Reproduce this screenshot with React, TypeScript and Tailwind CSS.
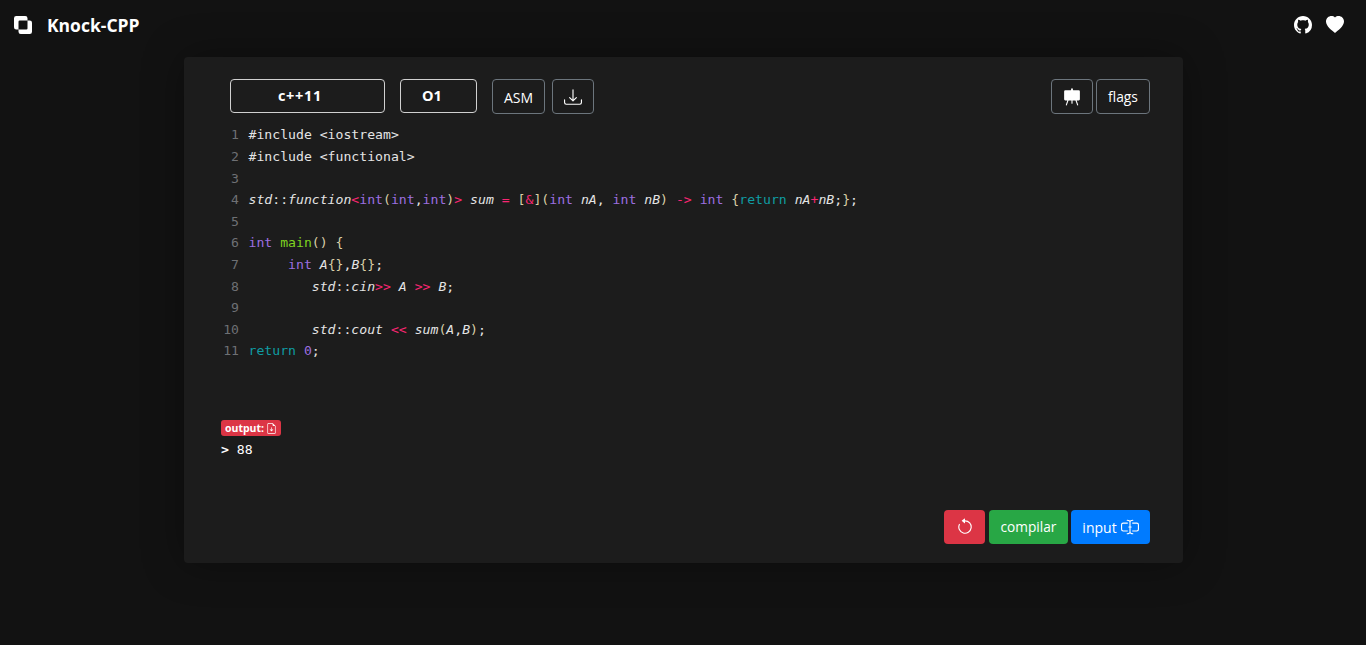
import type { ReactNode } from "react";

const sans = "font-['Open_Sans','Noto_Sans',sans-serif]";

function Kw({ children }: { children: ReactNode }) {
  return <span className="text-[#9c6fe0]">{children}</span>;
}
function Op({ children }: { children: ReactNode }) {
  return <span className="text-[#f92672]">{children}</span>;
}
function It({ children }: { children: ReactNode }) {
  return <span className="italic text-[#e4e4e4]">{children}</span>;
}
function Ret({ children }: { children: ReactNode }) {
  return <span className="text-[#0f9ca3]">{children}</span>;
}
function P({ children }: { children: ReactNode }) {
  return <span className="text-[#d9cfa8]">{children}</span>;
}

const lines: ReactNode[] = [
  <>#include &lt;iostream&gt;</>,
  <>#include &lt;functional&gt;</>,
  <></>,
  <>
    <It>std</It>::<It>function</It><Op>&lt;</Op><Kw>int</Kw><P>(</P><Kw>int</Kw>,<Kw>int</Kw><P>)</P><Op>&gt;</Op> <It>sum</It> <Op>=</Op> <P>[</P><Op>&amp;</Op><P>](</P><Kw>int</Kw> <It>nA</It>, <Kw>int</Kw> <It>nB</It><P>)</P> <Op>-&gt;</Op> <Kw>int</Kw> <P>{"{"}</P><Ret>return</Ret> <It>nA</It><Op>+</Op><It>nB</It>;<P>{"}"}</P>;
  </>,
  <></>,
  <>
    <Kw>int</Kw> <span className="text-[#7fd320]">main</span><P>()</P> <P>{"{"}</P>
  </>,
  <>
    {"     "}<Kw>int</Kw> <It>A</It><P>{"{}"}</P>,<It>B</It><P>{"{}"}</P>;
  </>,
  <>
    {"        "}<It>std</It>::<It>cin</It><Op>&gt;&gt;</Op> <It>A</It> <Op>&gt;&gt;</Op> <It>B</It>;
  </>,
  <></>,
  <>
    {"        "}<It>std</It>::<It>cout</It> <Op>&lt;&lt;</Op> <It>sum</It><P>(</P><It>A</It>,<It>B</It><P>)</P>;
  </>,
  <>
    <Ret>return</Ret> <Kw>0</Kw>;
  </>,
];

function DownloadIcon() {
  return (
    <svg viewBox="0 0 16 16" fill="currentColor" className="w-[18px] h-[18px]">
      <path d="M.5 9.9a.5.5 0 0 1 .5.5v2.5a1 1 0 0 0 1 1h12a1 1 0 0 0 1-1v-2.5a.5.5 0 0 1 1 0v2.5a2 2 0 0 1-2 2H2a2 2 0 0 1-2-2v-2.5a.5.5 0 0 1 .5-.5z" />
      <path d="M7.646 11.854a.5.5 0 0 0 .708 0l3-3a.5.5 0 0 0-.708-.708L8.5 10.293V1.5a.5.5 0 0 0-1 0v8.793L5.354 8.146a.5.5 0 1 0-.708.708l3 3z" />
    </svg>
  );
}

function EaselIcon() {
  return (
    <svg viewBox="0 0 16 16" fill="currentColor" className="w-[18px] h-[18px]">
      <path d="M8.473.337a.5.5 0 0 0-.946 0L6.954 2H2a1 1 0 0 0-1 1v7a1 1 0 0 0 1 1h1.85l-1.323 3.837a.5.5 0 1 0 .946.326L4.908 11H7.5v2.5a.5.5 0 0 0 1 0V11h2.592l1.435 4.163a.5.5 0 0 0 .946-.326L12.15 11H14a1 1 0 0 0 1-1V3a1 1 0 0 0-1-1H9.046L8.473.337z" />
    </svg>
  );
}

export default function App() {
  return (
    <div className={`min-h-screen h-[645px] overflow-hidden bg-[#121212] text-white ${sans}`}>
      <nav className="h-[50px] flex items-center justify-between pl-[14px] pr-[22px]">
        <div className="flex items-center gap-[15px]">
          <svg viewBox="0 0 16 16" fill="currentColor" className="w-[18px] h-[18px]">
            <path d="M0 2a2 2 0 0 1 2-2h8a2 2 0 0 1 2 2v2h2a2 2 0 0 1 2 2v8a2 2 0 0 1-2 2H6a2 2 0 0 1-2-2v-2H2a2 2 0 0 1-2-2V2zm12 2H5a1 1 0 0 0-1 1v7h7a1 1 0 0 0 1-1V4z" />
          </svg>
          <span className="text-[17.5px] font-bold">Knock-CPP</span>
        </div>
        <div className="flex items-center gap-[14px]">
          <svg viewBox="0 0 16 16" fill="currentColor" className="w-[18px] h-[18px]">
            <path d="M8 0C3.58 0 0 3.58 0 8c0 3.54 2.29 6.53 5.47 7.59.4.07.55-.17.55-.38 0-.19-.01-.82-.01-1.49-2.01.37-2.53-.49-2.69-.94-.09-.23-.48-.94-.82-1.13-.28-.15-.68-.52-.01-.53.63-.01 1.08.58 1.23.82.72 1.21 1.87.87 2.33.66.07-.52.28-.87.51-1.07-1.78-.2-3.64-.89-3.64-3.95 0-.87.31-1.59.82-2.15-.08-.2-.36-1.02.08-2.12 0 0 .67-.21 2.2.82.64-.18 1.32-.27 2-.27.68 0 1.36.09 2 .27 1.53-1.04 2.2-.82 2.2-.82.44 1.1.16 1.92.08 2.12.51.56.82 1.27.82 2.15 0 3.07-1.87 3.75-3.65 3.95.29.25.54.73.54 1.48 0 1.07-.01 1.93-.01 2.2 0 .21.15.46.55.38A8.012 8.012 0 0 0 16 8c0-4.42-3.58-8-8-8z" />
          </svg>
          <svg viewBox="0 0 16 16" fill="currentColor" className="w-[18px] h-[18px]">
            <path fillRule="evenodd" d="M8 1.314C12.438-3.248 23.534 4.735 8 15-7.534 4.736 3.562-3.248 8 1.314z" />
          </svg>
        </div>
      </nav>

      <main className="ml-[184px] mt-[7px] w-[999px] h-[506px] rounded-[4px] bg-[#1c1c1c] shadow-[0_0_40px_rgba(0,0,0,0.35)] flex flex-col pt-[22px] pb-[19px] pl-[37px] pr-[33px]">
        <div className="flex items-start justify-between pl-[9px]">
          <div className="flex items-start">
            <div className="w-[155px] h-[34px] rounded-[4px] border border-[#d0d0d0] flex items-center justify-center pr-[15px] text-[14.5px] font-bold tracking-[0.7px]">c++11</div>
            <div className="ml-[15px] w-[77px] h-[34px] rounded-[4px] border border-[#d0d0d0] flex items-center justify-center pr-[13px] text-[14.5px] font-bold">O1</div>
            <button className="ml-[15px] w-[53px] h-[35px] pt-[1px] rounded-[4px] border border-[#6c757d] flex items-center justify-center text-[14px]">ASM</button>
            <button className="ml-[7px] w-[42px] h-[35px] rounded-[4px] border border-[#6c757d] flex items-center justify-center"><DownloadIcon /></button>
          </div>
          <div className="flex items-start gap-[3px]">
            <button className="w-[42px] h-[35px] rounded-[4px] border border-[#6c757d] flex items-center justify-center"><EaselIcon /></button>
            <button className="w-[54px] h-[35px] pt-[1px] rounded-[4px] border border-[#6c757d] flex items-center justify-center text-[13.8px]">flags</button>
          </div>
        </div>

        <div className="mt-[10.4px] font-['DejaVu_Sans_Mono',monospace] text-[13.15px] leading-[21.6px] text-[#e4e4e4]">
          {lines.map((line, i) => (
            <div key={i} className="flex h-[21.6px]">
              <span className="w-[18px] mr-[9.5px] text-right text-[#6e7074]">{i + 1}</span>
              <span className="whitespace-pre">{line}</span>
            </div>
          ))}
        </div>

        <div className="mt-[51.9px]">
          <span className="inline-flex items-center h-4 px-1 gap-[2px] rounded-[3px] bg-[#dc3545] text-[10.5px] font-bold leading-none">
            output:
            <svg viewBox="0 0 16 16" fill="currentColor" className="w-[11px] h-[11px]">
              <path d="M8.5 6.5a.5.5 0 0 0-1 0v3.793L6.354 9.146a.5.5 0 1 0-.708.708l2 2a.5.5 0 0 0 .708 0l2-2a.5.5 0 0 0-.708-.708L8.5 10.293V6.5z" />
              <path d="M14 14V4.5L9.5 0H4a2 2 0 0 0-2 2v12a2 2 0 0 0 2 2h8a2 2 0 0 0 2-2zM9.5 3A1.5 1.5 0 0 0 11 4.5h2V14a1 1 0 0 1-1 1H4a1 1 0 0 1-1-1V2a1 1 0 0 1 1-1h5.5v2z" />
            </svg>
          </span>
          <div className="mt-[1px] font-['DejaVu_Sans_Mono',monospace] text-[13.15px] leading-[21px] whitespace-pre"><span className="font-bold">&gt;</span> 88</div>
        </div>

        <div className="mt-auto flex justify-end gap-[3px]">
          <button className="mr-[1px] w-[41px] h-[34px] rounded-[4px] bg-[#dc3545] flex items-center justify-center">
            <svg viewBox="0 0 16 16" fill="currentColor" className="w-[18px] h-[18px]">
              <path fillRule="evenodd" d="M8 3a5 5 0 1 1-4.546 2.914.5.5 0 0 0-.908-.417A6 6 0 1 0 8 2v1z" />
              <path d="M8 4.466V.534a.25.25 0 0 0-.41-.192L5.23 2.308a.25.25 0 0 0 0 .384l2.36 1.966A.25.25 0 0 0 8 4.466z" />
            </svg>
          </button>
          <button className="w-[79px] h-[34px] rounded-[4px] bg-[#28a745] flex items-center justify-center text-[13.7px]">compilar</button>
          <button className="w-[79px] h-[34px] rounded-[4px] bg-[#007bff] flex items-center justify-center gap-[4px] text-[14px]">
            input
            <svg viewBox="0 0 16 16" fill="currentColor" className="w-[18px] h-[18px]">
              <path fillRule="evenodd" d="M5 2a.5.5 0 0 1 .5-.5c.862 0 1.573.287 2.06.566.174.099.321.198.44.286.119-.088.266-.187.44-.286A4.165 4.165 0 0 1 10.5 1.5a.5.5 0 0 1 0 1c-.638 0-1.177.213-1.564.434a3.49 3.49 0 0 0-.436.294V7.5H9a.5.5 0 0 1 0 1h-.5v4.272c.1.08.248.187.436.294.387.221.926.434 1.564.434a.5.5 0 0 1 0 1 4.165 4.165 0 0 1-2.06-.566A4.561 4.561 0 0 1 8 13.65a4.561 4.561 0 0 1-.44.285 4.165 4.165 0 0 1-2.06.566.5.5 0 0 1 0-1c.638 0 1.177-.213 1.564-.434.188-.107.335-.214.436-.294V8.5H7a.5.5 0 0 1 0-1h.5V3.228a3.49 3.49 0 0 0-.436-.294A3.166 3.166 0 0 0 5.5 2.5.5.5 0 0 1 5 2z" />
              <path d="M10 5h4a1 1 0 0 1 1 1v4a1 1 0 0 1-1 1h-4v1h4a2 2 0 0 0 2-2V6a2 2 0 0 0-2-2h-4v1zM6 5V4H2a2 2 0 0 0-2 2v4a2 2 0 0 0 2 2h4v-1H2a1 1 0 0 1-1-1V6a1 1 0 0 1 1-1h4z" />
            </svg>
          </button>
        </div>
      </main>
    </div>
  );
}
